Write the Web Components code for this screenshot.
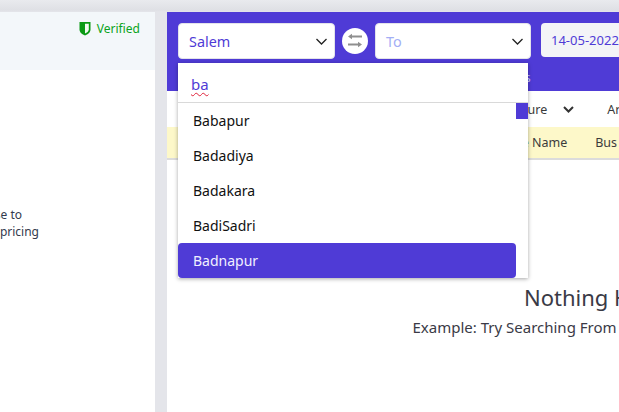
<!DOCTYPE html>
<html><head><meta charset="utf-8">
<style>
html,body{margin:0;height:412px;overflow:hidden}
body{background:#e4e5ea;font-family:"Noto Sans",sans-serif}
</style></head><body>
<app-shell>
  <side-panel></side-panel>
  <search-panel></search-panel>
</app-shell>
<script>
function def(name,html){
  customElements.define(name,class extends HTMLElement{
    constructor(){super();this.attachShadow({mode:'open'}).innerHTML=html;}
  });
}
const chev=`<svg width="11" height="7" viewBox="0 0 11 7" fill="none" stroke="#222" stroke-width="1.300"><path d="M.5 1 5.500 6 10.500 1"/></svg>`;
def('app-shell',`<style>
:host{display:flex;gap:12px;height:412px;box-sizing:border-box;padding-top:12px;
background:linear-gradient(#e9eaee 0,#dfe0e5 10px,#e4e5ea 12px);overflow:hidden}
</style><slot></slot>`);
def('side-panel',`<style>
:host{display:block;width:155px;flex:none;background:#fff;overflow:hidden;color:#333a4d;font-size:12px}
.head{height:58px;background:#f3f7fa;box-sizing:border-box;padding:7px 15px 0 0;display:flex;justify-content:flex-end;align-items:flex-start;gap:6px;color:#0aa320;line-height:20px}
svg{margin-top:2px}
p{margin:136px 0 0 -100px;width:260px;line-height:17px;text-align:right}
p span{display:block}
</style>
<div class="head"><svg width="12" height="15" viewBox="0 0 12 15"><path d="M.5 1h11v7.500c0 3-2.800 5-5.500 6-2.700-1-5.500-3-5.500-6z" fill="#0a9a14"/><path d="M6 2.800h3.800v5.400C9.800 10.400 7.800 11.700 6 12.500z" fill="#f2fbf2"/></svg><span>Verified</span></div>
<p><span style="width:122px">You are close to</span><span style="width:139px">the best pricing</span></p>`);
def('field-select',`<style>
:host{display:flex;flex:none;box-sizing:border-box;width:var(--w,157px);height:36px;background:#fff;border:1px solid #e3e3ea;border-radius:4px;align-items:center;justify-content:space-between;padding:0 7px 0 10px;font-size:14.400px;color:var(--c,#4f3bd6)}
</style><slot></slot>${chev}`);
def('swap-btn',`<style>
:host{display:flex;flex:none;width:26px;height:26px;border-radius:50%;background:#fff;align-items:center;justify-content:center}
</style><svg width="16" height="16" viewBox="0 0 16 16" fill="#8f8f8f"><path d="M15 2.600v1.800H5V6.200L1 3.500 5 .8v1.800zM1 10.600h10V8.800l4 2.700-4 2.700v-1.800H1z"/></svg>`);
def('search-dropdown',`<style>
:host{position:absolute;left:11px;top:51px;width:350px;height:215px;background:#fff;box-shadow:0 1px 4px rgba(0,0,0,.35);z-index:5;font-size:14px;color:#111;overflow:hidden}
.q{height:39px;border-bottom:1px solid #d9d9d9;padding-left:13px;line-height:42px;font-size:15px;color:#4f3bd6}
.q span{text-decoration:underline wavy #e0243c 1px;text-underline-offset:2px}
.list{display:flex;flex-direction:column;margin-right:12px}
.o{height:35px;line-height:35px;padding-left:15px;border-radius:4px}
.o.on{background:#4f3bd6;color:#f1f0ff}
.thumb{position:absolute;right:0;top:40px;width:12px;height:16px;background:#4f3bd6}
</style>
<div class="q"><span>ba</span></div>
<div class="thumb"></div>
<div class="list"><div class="o">Babapur</div><div class="o">Badadiya</div><div class="o">Badakara</div><div class="o">BadiSadri</div><div class="o on">Badnapur</div></div>`);
def('search-panel',`<style>
:host{display:block;position:relative;flex:1;min-width:0;background:#fff;overflow:hidden;color:#333a4d}
.bar{height:79px;background:#4f3bd6;box-sizing:border-box;padding:11px 0 0 11px}
.fields{display:flex;align-items:flex-start}
swap-btn{margin:5px 7px 0 7px}
.date{flex:none;margin-left:10px;width:130px;height:34px;box-sizing:border-box;background:#f3f4f7;border-radius:4px;padding-left:10px;line-height:34px;font-size:13px;color:#4f3bd6;white-space:nowrap}
.tab{margin:9px 0 0 298px;font-size:13px;color:#c9c4f4;white-space:nowrap;line-height:18px}
.sort{height:36px;display:flex;align-items:center;font-size:12.500px;padding-left:320px;white-space:nowrap;color:#3a3a3a}
.sort svg{margin-left:16px;flex:none}
.sort b{font-weight:400;margin-left:33px}
.head{height:33px;box-sizing:border-box;border-bottom:2px solid #dcdcdc;background:#fdf8c9;display:flex;align-items:center;font-size:12.500px;padding-left:320px;white-space:nowrap;color:#3b3b3b}
.head b{font-weight:400;margin-left:28px}
.empty{white-space:nowrap}
h2{margin:122px 0 0 357px;font-weight:400;font-size:22px;line-height:30px;color:#3a3a46}
p{margin:5px 0 0 245.500px;font-size:15px;line-height:20px;color:#3a3a46}
</style>
<div class="bar"><div class="fields">
<field-select>Salem</field-select><swap-btn></swap-btn>
<field-select style="--c:#a3aef5;--w:156px">To</field-select>
<div class="date">14-05-2022</div></div>
<div class="tab">All Buses</div></div>
<div class="sort"><span>Departure</span><svg width="11" height="7" viewBox="0 0 11 7" fill="none" stroke="#333" stroke-width="2"><path d="M1 1 5.500 5.500 10 1"/></svg><b>Arrival</b></div>
<div class="head"><span>Service Name</span><b>Bus Type</b></div>
<div class="empty"><h2>Nothing Here</h2><p>Example: Try Searching From Chennai To Bangalore</p></div>
<search-dropdown></search-dropdown>`);
</script>
</body></html>
